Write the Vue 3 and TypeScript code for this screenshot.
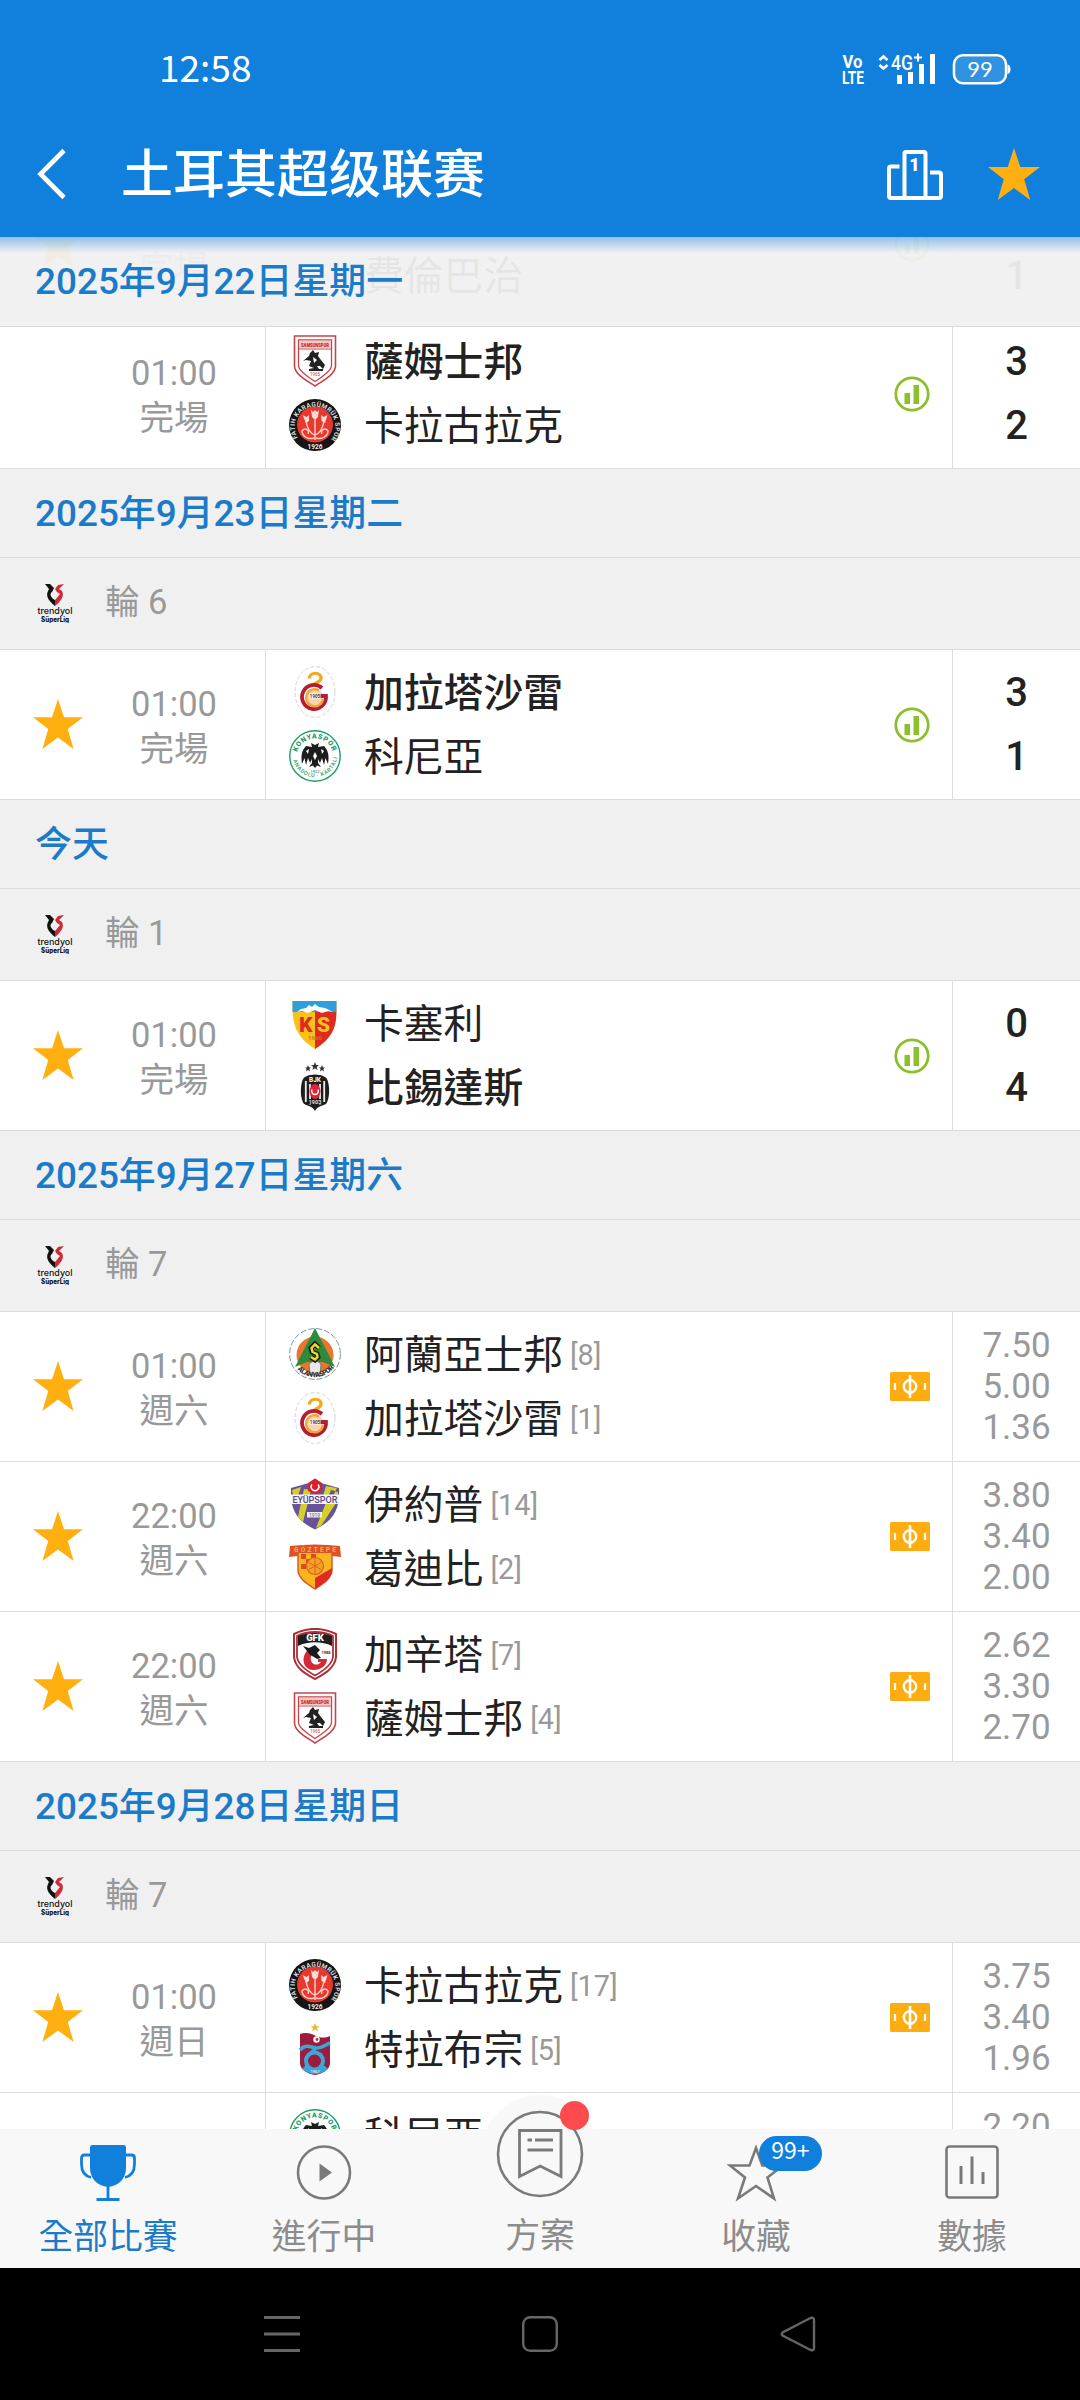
<script setup lang="ts">
interface Team {
  name: string
  crest?: string
  rank?: number
  winner?: boolean
}

interface Match {
  time: string
  status: string
  starred: boolean
  home: Team
  away: Team
  score?: string[]
  odds?: string[]
}

interface Section {
  date?: string
  round?: string
  matches: Match[]
}

const sections: Section[] = [
  {
    matches: [
      {
        time: '',
        status: '完場',
        starred: true,
        home: { name: '' },
        away: { name: '費倫巴治' },
        score: ['', '1'],
      },
      {
        time: '01:00',
        status: '完場',
        starred: false,
        home: { name: '薩姆士邦', crest: 'samsun', winner: true },
        away: { name: '卡拉古拉克', crest: 'karagumruk' },
        score: ['3', '2'],
      },
    ],
  },
  {
    date: '2025年9月23日星期二',
    round: '輪 6',
    matches: [
      {
        time: '01:00',
        status: '完場',
        starred: true,
        home: { name: '加拉塔沙雷', crest: 'galatasaray', winner: true },
        away: { name: '科尼亞', crest: 'konya' },
        score: ['3', '1'],
      },
    ],
  },
  {
    date: '今天',
    round: '輪 1',
    matches: [
      {
        time: '01:00',
        status: '完場',
        starred: true,
        home: { name: '卡塞利', crest: 'kayseri' },
        away: { name: '比錫達斯', crest: 'besiktas', winner: true },
        score: ['0', '4'],
      },
    ],
  },
  {
    date: '2025年9月27日星期六',
    round: '輪 7',
    matches: [
      {
        time: '01:00',
        status: '週六',
        starred: true,
        home: { name: '阿蘭亞士邦', crest: 'alanya', rank: 8 },
        away: { name: '加拉塔沙雷', crest: 'galatasaray', rank: 1 },
        odds: ['7.50', '5.00', '1.36'],
      },
      {
        time: '22:00',
        status: '週六',
        starred: true,
        home: { name: '伊約普', crest: 'eyup', rank: 14 },
        away: { name: '葛迪比', crest: 'goztepe', rank: 2 },
        odds: ['3.80', '3.40', '2.00'],
      },
      {
        time: '22:00',
        status: '週六',
        starred: true,
        home: { name: '加辛塔', crest: 'gaziantep', rank: 7 },
        away: { name: '薩姆士邦', crest: 'samsun', rank: 4 },
        odds: ['2.62', '3.30', '2.70'],
      },
    ],
  },
  {
    date: '2025年9月28日星期日',
    round: '輪 7',
    matches: [
      {
        time: '01:00',
        status: '週日',
        starred: true,
        home: { name: '卡拉古拉克', crest: 'karagumruk', rank: 17 },
        away: { name: '特拉布宗', crest: 'trabzon', rank: 5 },
        odds: ['3.75', '3.40', '1.96'],
      },
      {
        time: '',
        status: '',
        starred: false,
        home: { name: '科尼亞', crest: 'konya' },
        away: { name: '' },
        odds: ['2.20'],
      },
    ],
  },
]

const stickyDate = '2025年9月22日星期一'

const starPath = 'M25 0L31 18.3H50L34.8 30L40.6 50L25 38.5L9.4 50L15.2 30L0 18.3H19Z'
</script>

<template>
  <div class="screen">
    <!-- Header -->
    <header class="header">
      <div class="status-bar">
        <span class="clock">12:58</span>
        <svg width="172" height="34" viewBox="0 0 172 34">
          <g fill="#fff" font-family="Roboto, sans-serif">
            <text x="2.500" y="15.500" font-size="17.500" font-weight="700" textLength="20" lengthAdjust="spacingAndGlyphs">Vo</text>
            <text x="2" y="32" font-size="19" font-weight="700" textLength="22" lengthAdjust="spacingAndGlyphs">LTE</text>
            <text x="51" y="17.500" font-size="21" font-weight="500" textLength="22" lengthAdjust="spacingAndGlyphs">4G</text>
            <rect x="57" y="23" width="5" height="9" />
            <rect x="68" y="20" width="5" height="12" />
            <rect x="79" y="12" width="5" height="20" />
            <rect x="90" y="2" width="5" height="30" />
          </g>
          <g fill="none" stroke="#fff" stroke-width="2.600">
            <path d="M39.500 8L43.500 4.500L47.500 8M39.500 13L43.500 16.500L47.500 13" />
            <path d="M74 5.500H82M78 1.500V9.500" stroke-width="2" />
            <rect x="114" y="3.200" width="52" height="28" rx="9" />
          </g>
          <rect x="115.500" y="4.700" width="49" height="25" rx="7.500" fill="#fff" opacity=".14" />
          <path d="M167.500 12.500C171.500 12.500 171.500 22 167.500 22Z" fill="#fff" />
          <text x="140" y="24.800" text-anchor="middle" font-family="Lato, sans-serif" font-size="22" fill="#fff">99</text>
        </svg>
      </div>
      <div class="title-bar">
        <svg width="30" height="52" viewBox="0 0 30 52">
          <path d="M27 2.500L3.500 26L27 49.500" fill="none" stroke="#fff" stroke-width="4.600" />
        </svg>
        <h1 class="title">土耳其超级联赛</h1>
        <svg class="podium" width="58" height="52" viewBox="0 0 58 52">
          <g fill="none" stroke="#fff" stroke-width="4" stroke-linejoin="round">
            <path d="M18.500 49V4.500Q18.500 3 20 3H38Q39.500 3 39.500 4.500V49" />
            <path d="M13.500 17.500H5Q3 17.500 3 19.500V47Q3 49 5 49H53Q55 49 55 47V25.500Q55 23.500 53 23.500H44" />
          </g>
          <text x="28.500" y="22" text-anchor="middle" font-family="Roboto, sans-serif" font-weight="900" font-size="18" fill="#fff">1</text>
        </svg>
        <svg width="52" height="52" viewBox="0 0 50 50">
          <path :d="starPath" fill="#ffb010" />
        </svg>
      </div>
    </header>

    <!-- Match list -->
    <main class="list">
      <div class="scroll">
        <section v-for="(section, i) in sections" :key="i">
          <h2 v-if="section.date" class="date">{{ section.date }}</h2>
          <div v-if="section.round" class="round">
            <svg width="38" height="40" viewBox="0 0 38 40">
              <path d="M9 1H14L18 5L16 9C13 11 15 15 19 17V23C14 19 9 14 12 8L13 6Z" fill="#111" />
              <path d="M28 1L22 2L19 6L21 9L24 11C22 13 20 16 19 17V23C24 19 29 13 26 8L23 6Z" fill="#cf2a3a" />
              <text x="19" y="30.500" text-anchor="middle" font-family="Inter, sans-serif" font-weight="500" font-size="9" textLength="35" lengthAdjust="spacingAndGlyphs" fill="#111">trendyol</text>
              <text x="19" y="39" text-anchor="middle" font-family="Inter, sans-serif" font-weight="800" font-size="7" textLength="28" lengthAdjust="spacingAndGlyphs" fill="#111">SüperLig</text>
            </svg>
            <span>{{ section.round }}</span>
          </div>

          <div v-for="(match, j) in section.matches" :key="j" class="match">
            <div class="when">
              <div class="star-slot">
                <svg v-if="match.starred" width="50" height="50" viewBox="0 0 50 50">
                  <path :d="starPath" fill="#ffb010" />
                </svg>
              </div>
              <div class="time">
                <span class="line">{{ match.time }}</span>
                <span class="line">{{ match.status }}</span>
              </div>
            </div>

            <div class="teams">
              <div v-for="(team, k) in [match.home, match.away]" :key="k" class="team">
                <svg class="crest" width="52" height="52" viewBox="0 0 52 52">
                  <g v-if="team.crest === 'samsun'">
                    <path d="M5.500 1H46.500V31C46.500 39 35 45 26 51C17 45 5.500 39 5.500 31Z" fill="#fff" stroke="#c8444a" stroke-width="1.600" />
                    <path d="M9.500 5H42.500V30C42.500 36 34 41 26 46.500C18 41 9.500 36 9.500 30Z" fill="#fff" stroke="#c8444a" stroke-width="1.300" />
                    <rect x="10" y="5.500" width="32" height="7.500" fill="#f6c9c9" />
                    <text x="26" y="11.500" text-anchor="middle" font-family="Roboto, sans-serif" font-weight="900" font-size="6" textLength="28" lengthAdjust="spacingAndGlyphs" fill="#c41f2a">SAMSUNSPOR</text>
                    <path d="M10 14H42" stroke="#c8444a" />
                    <path d="M14 26L20 21L21 18L24 15L26 18L30 17L29 21L32 25L36 30L34 34L31 31L28 31L30 34H34V36H20V34L25 33L20 31L22 26L17 25Z" fill="#222" />
                    <path d="M24 22L28 25L25 28Z" fill="#fff" />
                    <text x="26" y="41" text-anchor="middle" font-family="Roboto, sans-serif" font-size="4.500" fill="#c8444a">1965</text>
                  </g>

                  <g v-else-if="team.crest === 'karagumruk'">
                    <path id="karagumruk-ring" d="M10.500 41A20.300 20.300 0 1 1 41.500 41" fill="none" />
                    <circle cx="26" cy="26" r="26" fill="#151515" />
                    <circle cx="26" cy="25.500" r="18" fill="#e8392f" />
                    <text font-family="Roboto, sans-serif" font-weight="700" font-size="6.500" fill="#ddd"><textPath href="#karagumruk-ring" startOffset="3" textLength="88">FATIH KARAGÜMRÜK SPOR</textPath></text>
                    <text x="26" y="49.800" text-anchor="middle" font-family="Roboto, sans-serif" font-weight="700" font-size="6.500" fill="#eee">1926</text>
                    <path d="M26 41V21M26 36C20 34 18 28 17 22M26 36C32 34 34 28 35 22M25 39C19 41 13 37 13 32C16 28 21 31 19 35M27 39C33 41 39 37 39 32C36 28 31 31 33 35" fill="none" stroke="#ffc9c0" stroke-width="1.500" />
                    <path d="M22 11L24 13L26 11L28 13L30 11L29 18L26 21L23 18ZM13.500 16L17.500 18L20 16L20 22L17 24ZM32 16L34.500 18L38.500 16L36 24L32.500 22Z" fill="#ffd9d2" />
                  </g>

                  <g v-else-if="team.crest === 'galatasaray'">
                    <ellipse cx="26" cy="26" rx="20" ry="25.400" fill="#fff" stroke="#c9c9cf" stroke-width=".8" stroke-dasharray="4 2" />
                    <path d="M20.500 12.500C20.500 5.500 32.500 5.500 32 12.500C31.500 17 24 16 24 21" fill="none" stroke="#f4a81c" stroke-width="3.200" />
                    <circle cx="26" cy="32" r="9" fill="#fbd3ac" />
                    <path d="M33 22A12 12 0 1 0 37 30H29" fill="none" stroke="#b21f32" stroke-width="3.800" />
                    <path d="M34 33A8.500 8.500 0 1 1 30 24.500" fill="none" stroke="#f4a33b" stroke-width="2.400" />
                    <rect x="20.500" y="27.500" width="11" height="5" fill="#fff" />
                    <text x="26" y="31.800" text-anchor="middle" font-family="Roboto, sans-serif" font-weight="700" font-size="4.500" fill="#333">1905</text>
                  </g>

                  <g v-else-if="team.crest === 'konya'">
                    <path id="konya-top" d="M8.200 22A18.500 18.500 0 0 1 43.800 22" fill="none" />
                    <path id="konya-bottom" d="M3.800 27A22.300 22.300 0 0 0 48.200 27" fill="none" />
                    <circle cx="26" cy="26" r="25.200" fill="#fff" stroke="#1f9c69" stroke-width="1.400" />
                    <text font-family="Roboto, sans-serif" font-weight="900" font-size="7" fill="#1f9c69"><textPath href="#konya-top" textLength="47">KONYASPOR</textPath></text>
                    <text font-family="Roboto, sans-serif" font-weight="700" font-size="5.500" fill="#3fae82"><textPath href="#konya-bottom" startOffset="3" textLength="62">ANADOLU · KARTALI</textPath></text>
                    <path d="M26 15L22 13L23 17L17 16C12 21 12 27 13 34L15.500 28L17 35L19 28L21 33L23 29L23 33L20 37L24 35.500L26 38L28 35.500L32 37L29 33L29 29L31 33L33 28L35 35L36.500 28L39 34C40 27 40 21 35 16L29 17L30 13Z" fill="#1d1d1d" />
                    <path d="M26 22L24 26L26 30L28 26ZM17 21L20 19L19 24ZM35 21L32 19L33 24Z" fill="#fff" />
                    <text x="26" y="42.500" text-anchor="middle" font-family="Roboto, sans-serif" font-size="4" fill="#444">1922</text>
                  </g>

                  <g v-else-if="team.crest === 'kayseri'">
                    <path d="M3.500 4H47.500C48 25 47 39 26 52C5 39 3 25 3.500 4Z" fill="#f9c21b" />
                    <path d="M26 14H47.300C47.600 29 44 41 26 52Z" fill="#dd2b22" />
                    <path d="M3.500 4H47.500V15H3.500Z" fill="#2f9fdb" />
                    <path d="M8 15L12 12L17 11L20 8L23 10L26 7L30 10L36 11L44 15L39 14L33 16L26 13L19 16L13 14Z" fill="#fff" />
                    <text x="10" y="34.500" font-family="Roboto, sans-serif" font-weight="900" font-size="20" textLength="13.500" lengthAdjust="spacingAndGlyphs" fill="#dd2b22">K</text>
                    <text x="28" y="34.500" font-family="Roboto, sans-serif" font-weight="900" font-size="20" textLength="13" lengthAdjust="spacingAndGlyphs" fill="#f9c21b">S</text>
                    <text x="26" y="42.500" text-anchor="middle" font-family="Roboto, sans-serif" font-weight="700" font-size="6" fill="#c77817">1966</text>
                  </g>

                  <g v-else-if="team.crest === 'besiktas'">
                    <path d="M26 1L27.200 4H30L27.800 6L28.600 9L26 7.300L23.400 9L24.200 6L22 4H24.800ZM19 4L20 6.500H22L20.400 8L21 10.500L19 9L17 10.500L17.600 8L16 6.500H18ZM33 4L34 6.500H36L34.400 8L35 10.500L33 9L31 10.500L31.600 8L30 6.500H32Z" fill="#333" />
                    <path d="M14 18C16 15 20 14 26 13.500C32 14 36 15 38 18C41 24 41 38 37 43C32 45 28 46 26 50C24 46 20 45 15 43C11 38 11 24 14 18Z" fill="#1e1e1e" />
                    <path d="M16.800 20V41M35.200 20V41M21 23V44M31 23V44" stroke="#eee" stroke-width="1.800" />
                    <rect x="20" y="14.500" width="12" height="8" fill="#1e1e1e" />
                    <text x="26" y="21" text-anchor="middle" font-family="Roboto, sans-serif" font-weight="700" font-size="6.500" fill="#fff">BJK</text>
                    <ellipse cx="26" cy="30.500" rx="5.500" ry="7.500" fill="#e02636" />
                    <path d="M23 28.500A3.400 3.400 0 1 0 29 28.500" fill="none" stroke="#fff" stroke-width="1.500" />
                    <rect x="20" y="38" width="12" height="5.500" fill="#1e1e1e" />
                    <text x="26" y="42.800" text-anchor="middle" font-family="Roboto, sans-serif" font-weight="700" font-size="5.500" fill="#ddd">1903</text>
                  </g>

                  <g v-else-if="team.crest === 'alanya'">
                    <path id="alanya-bottom" d="M6 38A23.500 23.500 0 0 0 46 38" fill="none" />
                    <circle cx="26" cy="26" r="25.400" fill="#fff" stroke="#7b93a4" stroke-dasharray="6 2" />
                    <circle cx="26" cy="27" r="18.500" fill="#e9762e" />
                    <path d="M26 0L46 39L34 34H18L6 39Z" fill="#2f8a3c" />
                    <path d="M20 36Q26 30 32 36L31 47H21Z" fill="#e8e8e8" stroke="#666" stroke-width=".8" />
                    <path d="M30 20L26 16L22 20L23 24L28 26L29 29L26 32L22 29" fill="none" stroke="#1c1c1c" stroke-width="5" />
                    <path d="M30 20L26 16.500L22.500 20L23.500 24L28 26L28.500 29L26 31.500L22 29" fill="none" stroke="#f6dc1e" stroke-width="2.400" />
                    <text font-family="Roboto, sans-serif" font-weight="900" font-size="7" fill="#333"><textPath href="#alanya-bottom" startOffset="4" textLength="42">ALANYASPOR</textPath></text>
                  </g>

                  <g v-else-if="team.crest === 'eyup'">
                    <path d="M26 .5L32 5L50 10C51 30 46 42 26 51.500C6 42 1 30 2 10L20 5Z" fill="#68529a" />
                    <path d="M3 12L12 9L6 27ZM37 8L48 10L44 18H34ZM15 11L9 39L14 44L22 12ZM42 12L27 50L32 48L49 22V14Z" fill="#d6cf2a" />
                    <path d="M26 .5L33 5V13L26 16.500L19 13V5Z" fill="#d8202c" />
                    <path d="M23 6.500A3.800 3.800 0 1 0 29 6.500" fill="none" stroke="#fff" stroke-width="1.500" />
                    <path d="M2 16.500H50V26H2Z" fill="#f6f5fa" />
                    <text x="26" y="24.600" text-anchor="middle" font-family="Roboto, sans-serif" font-weight="500" font-size="9" textLength="45" lengthAdjust="spacingAndGlyphs" fill="#56458c">EYÜPSPOR</text>
                    <rect x="18" y="34" width="15" height="5.500" fill="#f1f0e2" />
                    <text x="25.500" y="38.600" text-anchor="middle" font-family="Roboto, sans-serif" font-size="5" fill="#68529a">1919</text>
                  </g>

                  <g v-else-if="team.crest === 'goztepe'">
                    <path d="M9 10H43V28C43 36 35 41 26 47C17 41 9 36 9 28Z" fill="#f9b71e" stroke="#d5542a" stroke-width="1.400" />
                    <path d="M26 47V36L43 26V28C43 36 35 41 26 47Z" fill="#df2b26" />
                    <path d="M12 12H17V17H12ZM22 12H27V17H22ZM17 17H22V22H17ZM12 22H17V27H12ZM22 22H27V27H22Z" fill="#d9492a" />
                    <path d="M1 4Q26 1 51 4L52 15L43 14V11H9V14L0 15Z" fill="#dd5229" />
                    <text x="26" y="9.800" text-anchor="middle" font-family="Roboto, sans-serif" font-weight="700" font-size="6.500" textLength="42" fill="#ffb13d">GÖZTEPE</text>
                    <circle cx="26" cy="24" r="8.500" fill="#f4a31f" stroke="#d9602a" stroke-width="1.200" />
                    <path d="M20 20.500L32 27.500M20 27.500L32 20.500M26 15.500V32.500" stroke="#d9602a" />
                  </g>

                  <g v-else-if="team.crest === 'gaziantep'">
                    <path d="M26 .8C33 1 41 3 47 6V29C46 40 35 46 26 51C17 46 6 40 5 29V6C11 3 19 1 26 .8Z" fill="#fff" stroke="#b02d38" stroke-width="2" />
                    <path d="M26 4C32 4 39 5.500 44 8V29C43 37 34 43 26 47.500C18 43 9 37 8 29V8C13 5.500 20 4 26 4Z" fill="#fff" stroke="#b02d38" stroke-width="1.800" />
                    <path d="M9 8C19 4 33 4 43 8V18C33 13 19 13 9 18Z" fill="#1f1f1f" />
                    <text x="26" y="13" text-anchor="middle" font-family="Roboto, sans-serif" font-weight="900" font-size="9.500" fill="#fff">GFK</text>
                    <path d="M21 20C12 26 12 41 24 42C34 42 38 36 38 31H29V34H32C29 39 18 37 23 25Z" fill="#d42a35" />
                    <path d="M14 18L20 20L26 17L31 22L28 25L32 30L28 31L25 29L21 27L18 23Z" fill="#1b1b1b" />
                    <text x="37" y="25.500" text-anchor="middle" font-family="Roboto, sans-serif" font-weight="700" font-size="4" fill="#333">1988</text>
                  </g>

                  <g v-else-if="team.crest === 'trabzon'">
                    <path d="M26 0L27.400 3.200H30.500L28 5.200L29 8.500L26 6.500L23 8.500L24 5.200L21.500 3.200H24.600Z" fill="#e9b93a" />
                    <path d="M11 11C16 9 22 10 27 13C32 15 36 15 41 13V40C41 47 33 51 26 52C19 51 11 47 11 40Z" fill="#9a1c3f" />
                    <path d="M13 46Q26 56 39 46L36 43H16Z" fill="#3aa7d6" />
                    <circle cx="25.500" cy="38" r="8.500" fill="#9a1c3f" stroke="#3aa7d6" stroke-width="4" />
                    <path d="M11 27C17 20 23 25 28 25C33 25 36 22 41 20M17 37C16 33 23 30 27 25" fill="none" stroke="#3aa7d6" stroke-width="3.600" />
                    <circle cx="27.500" cy="16.500" r="3.200" fill="#fff" />
                    <circle cx="28" cy="16.500" r="1.400" fill="#d8202c" />
                    <text x="26" y="49.500" text-anchor="middle" font-family="Roboto, sans-serif" font-size="4" fill="#fff">1967</text>
                  </g>
                </svg>
                <span class="name" :class="{ winner: team.winner }">{{ team.name }}</span>
                <span v-if="team.rank" class="rank">[{{ team.rank }}]</span>
              </div>
            </div>

            <div class="badge">
              <svg v-if="match.score" width="36" height="36" viewBox="0 0 36 36">
                <circle cx="18" cy="18" r="16.200" fill="none" stroke="#8bc02c" stroke-width="2.800" />
                <path d="M10.500 17H16V28H10.500ZM19.500 9H25V28H19.500Z" fill="#8bc02c" />
              </svg>
              <svg v-else width="40" height="29" viewBox="0 0 40 29">
                <rect width="40" height="29" rx="1.500" fill="#fdad12" />
                <circle cx="20" cy="14.500" r="6.200" fill="none" stroke="#fff" stroke-width="2.400" />
                <path d="M20 3V26" stroke="#fff" stroke-width="2.600" />
                <path d="M5 11V18M35 11V18" stroke="#fff" stroke-width="2.200" />
              </svg>
            </div>

            <div v-if="match.score" class="result score">
              <span v-for="(goals, k) in match.score" :key="k">{{ goals }}</span>
            </div>
            <div v-else class="result odds">
              <span v-for="(odd, k) in match.odds" :key="k">{{ odd }}</span>
            </div>
          </div>
        </section>
      </div>
      <h2 class="date sticky">{{ stickyDate }}</h2>
      <div class="header-shadow" />
    </main>

    <!-- Bottom tabs -->
    <nav class="tabs">
      <div class="tab active">
        <svg width="56" height="58" viewBox="0 0 56 58">
          <path d="M10 3.500Q10 1 12.500 1H43.500Q46 1 46 3.500V24C46 34 39 42 28 43C17 42 10 34 10 24Z" fill="#1080dc" />
          <path d="M10 11H4.500Q1.500 11 1.500 14V20C1.500 27 5 32 11 33.500M46 11H51.500Q54.500 11 54.500 14V20C54.500 27 51 32 45 33.500M28 42V55M16.500 55.500H39.500" fill="none" stroke="#1080dc" stroke-width="2.800" />
        </svg>
        <span>全部比賽</span>
      </div>
      <div class="tab">
        <svg width="56" height="58" viewBox="0 0 56 58">
          <circle cx="28" cy="28.500" r="26" fill="none" stroke="#7a7a7a" stroke-width="2.600" />
          <path d="M23.500 19.500L36 28.500L23.500 37.500Z" fill="#7a7a7a" />
        </svg>
        <span>進行中</span>
      </div>
      <div class="tab plan">
        <div class="plan-button">
          <svg width="88" height="88" viewBox="0 0 88 88">
            <circle cx="44" cy="44" r="42" fill="none" stroke="#7a7a7a" stroke-width="2.600" />
            <path d="M23.500 20.500H65V66.500L44.200 56L23.500 66.500Z" fill="none" stroke="#7a7a7a" stroke-width="2.800" />
            <path d="M31.500 30H36M39 30H57M31.500 40H57" stroke="#7a7a7a" stroke-width="2.800" />
          </svg>
          <i class="dot" />
        </div>
        <span>方案</span>
      </div>
      <div class="tab">
        <div class="icon-box">
          <svg width="58" height="58" viewBox="0 0 58 58">
            <path d="M29 4L35.300 21.500H56L40.500 33.500L47 54.500L29 42L11 54.500L18 33.500L3 21.500H22.500Z" fill="none" stroke="#7a7a7a" stroke-width="2.600" />
          </svg>
          <b class="count">99+</b>
        </div>
        <span>收藏</span>
      </div>
      <div class="tab">
        <svg width="56" height="58" viewBox="0 0 56 58">
          <rect x="2.500" y="2.500" width="51" height="51" rx="3" fill="none" stroke="#7a7a7a" stroke-width="2.600" />
          <path d="M17 22V40M28 12.500V40M39 28V40" stroke="#7a7a7a" stroke-width="3" />
        </svg>
        <span>數據</span>
      </div>
    </nav>

    <!-- System navigation -->
    <footer class="system-nav">
      <svg width="36" height="36" viewBox="0 0 36 36">
        <path d="M0 1.500H36M0 18H36M0 34.500H36" stroke="#666" stroke-width="3" />
      </svg>
      <svg width="36" height="36" viewBox="0 0 36 36">
        <rect x="1.200" y="1.200" width="33.600" height="33.600" rx="7" fill="none" stroke="#666" stroke-width="2.400" />
      </svg>
      <svg width="36" height="36" viewBox="0 0 36 36">
        <path d="M30.500 2L2.500 16.500Q1 18 2.500 19.500L30.500 34Q34 35 34 32V4Q34 1 30.500 2Z" fill="none" stroke="#666" stroke-width="2.400" />
      </svg>
    </footer>
  </div>
</template>

<style>
body {
  background: #000;
}
</style>

<style scoped>
.screen {
  display: flex;
  flex-direction: column;
  width: 1080px;
  height: 2400px;
  overflow: hidden;
  background: #fff;
  font-family: Roboto, "Noto Sans CJK TC", sans-serif;
}

svg {
  display: block;
  flex-shrink: 0;
}

h1,
h2 {
  margin: 0;
}

.header {
  height: 237px;
  flex-shrink: 0;
  background: #1080dc;
  color: #fff;
}

.status-bar {
  display: flex;
  align-items: center;
  justify-content: space-between;
  height: 110px;
  padding: 28px 68px 0 159px;
  box-sizing: border-box;
}

.clock {
  margin-bottom: 6px;
  font-family: "Noto Sans CJK SC", sans-serif;
  font-size: 37px;
  line-height: 40px;
}

.title-bar {
  display: flex;
  align-items: center;
  height: 127px;
  padding: 0 40px 0 37px;
}

.title {
  flex: 1;
  margin: 0 0 5px 54px;
  font-family: "Noto Sans CJK SC", sans-serif;
  font-size: 52px;
  font-weight: 500;
  line-height: 60px;
}

.podium {
  margin: 3px 44px 0 0;
}

.list {
  position: relative;
  height: 1892px;
  flex-shrink: 0;
  overflow: hidden;
}

/* scrolled so that one match is tucked under the header */
.scroll {
  margin-top: -68px;
}

.date {
  height: 89px;
  padding-left: 35px;
  box-sizing: border-box;
  border-bottom: 1px solid #dcdcdc;
  background: #f0f0f0;
  color: #1b7bc8;
  font-size: 36.9px;
  font-weight: 500;
  line-height: 89px;
}

.sticky {
  position: absolute;
  top: 0;
  left: 0;
  right: 0;
  height: 90px;
  background: rgba(240, 240, 240, 0.95);
  line-height: 90px;
}

.header-shadow {
  position: absolute;
  top: 0;
  left: 0;
  right: 0;
  height: 16px;
  background: linear-gradient(rgba(16, 128, 220, 0.42), rgba(16, 128, 220, 0));
}

.round {
  display: flex;
  align-items: center;
  gap: 31px;
  height: 92px;
  padding: 0 0 2px 36px;
  box-sizing: border-box;
  border-bottom: 1px solid #dcdcdc;
  background: #f0f0f0;
  color: #999;
  font-size: 34.5px;
}

.round span {
  height: 44px;
  line-height: 42px;
}

.match {
  display: flex;
  height: 150px;
  box-sizing: border-box;
  border-bottom: 1px solid #dcdcdc;
  background: #fff;
}

.when {
  display: flex;
  width: 266px;
  box-sizing: border-box;
  border-right: 1px solid #dcdcdc;
}

.star-slot {
  display: flex;
  align-items: center;
  width: 83px;
  padding: 0 0 2px 33px;
  box-sizing: border-box;
}

.time {
  display: flex;
  flex-direction: column;
  align-items: center;
  width: 182px;
  padding-top: 32px;
  color: #999;
  font-size: 34.5px;
  line-height: 45px;
}

.line {
  height: 45px;
}

.teams {
  flex: 1;
  padding: 10px 0 0 23px;
}

.team {
  display: flex;
  align-items: center;
  height: 64px;
}

.name {
  margin: 3px 0 0 23px;
  color: #222;
  font-size: 39.8px;
  line-height: 64px;
}

.winner {
  font-weight: 500;
}

.rank {
  margin: 2px 0 0 7px;
  color: #999;
  font-size: 28.8px;
  line-height: 64px;
}

.badge {
  display: flex;
  align-items: center;
  justify-content: flex-end;
  width: 80px;
  padding-right: 22px;
}

.result {
  display: flex;
  flex-direction: column;
  align-items: center;
  width: 128px;
  box-sizing: border-box;
  border-left: 1px solid #dcdcdc;
}

.score {
  padding-top: 11px;
  color: #222;
  font-size: 40px;
  font-weight: 500;
  line-height: 64px;
}

.score span {
  height: 64px;
}

.odds {
  padding-top: 13px;
  color: #999;
  font-size: 35px;
  line-height: 41px;
}

.tabs {
  position: relative;
  display: grid;
  grid-template-columns: repeat(5, 216px);
  height: 139px;
  flex-shrink: 0;
  background: #f8f8f8;
}

.tab {
  display: flex;
  flex-direction: column;
  align-items: center;
  padding-top: 15px;
  color: #8c8c8c;
  font-size: 34.8px;
  line-height: 40px;
}

.tab > span {
  margin-top: 15px;
}

.active {
  color: #1b7bc8;
}

.icon-box {
  position: relative;
}

.count {
  position: absolute;
  left: 32px;
  top: -8px;
  width: 63px;
  height: 35px;
  border-radius: 18px;
  background: #1080dc;
  color: #fff;
  font-family: "Noto Sans CJK TC", sans-serif;
  font-size: 23px;
  font-weight: 400;
  line-height: 26px;
  text-align: center;
}

.plan {
  padding-top: 0;
}

.plan-button {
  position: relative;
  width: 88px;
  height: 88px;
  margin-top: -34px;
  padding: 15px;
  border-radius: 50%;
  background: #f8f8f8;
}

.plan > span {
  margin-top: 3px;
}

.dot {
  position: absolute;
  top: 6px;
  right: 10px;
  width: 29px;
  height: 29px;
  border-radius: 50%;
  background: #ff4b4d;
}

.system-nav {
  display: flex;
  align-items: center;
  justify-content: space-between;
  height: 132px;
  flex-shrink: 0;
  padding: 0 264px;
  background: #000;
}
</style>
